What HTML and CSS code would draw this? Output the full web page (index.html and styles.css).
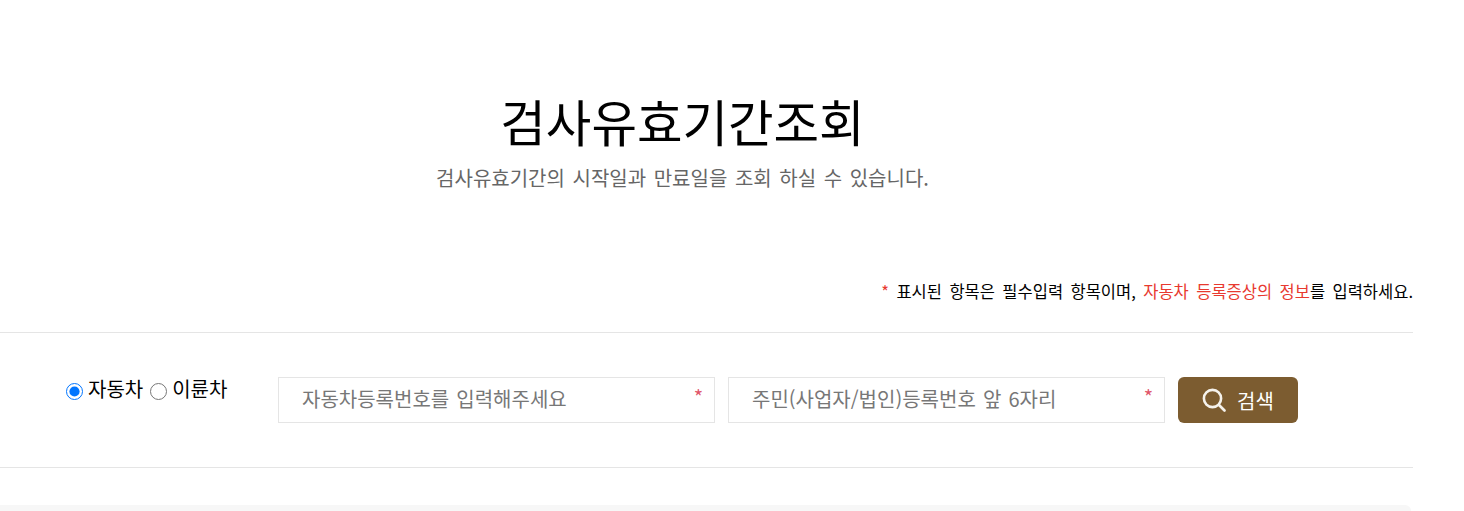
FILE: index.html
```html
<!DOCTYPE html>
<html lang="ko">
  <head>
    <meta charset="UTF-8" />
    <meta name="viewport" content="width=device-width, initial-scale=1.0" />
    <title>검사유효기간조회</title>
    <link rel="stylesheet" href="styles.css">
  </head>
  <body>
    <div class="page">
      <div class="title-box">
        <h1>검사유효기간조회</h1>
        <p>검사유효기간의 시작일과 만료일을 조회 하실 수 있습니다.</p>
      </div>

      <p class="notice">
        <span class="red">*</span> 표시된 항목은 필수입력 항목이며, <span class="red">자동차 등록증상의 정보</span>를 입력하세요.
      </p>

      <form class="search-row">
        <div class="radios">
          <label><input type="radio" name="kind" checked />자동차</label>
          <label><input type="radio" name="kind" />이륜차</label>
        </div>
        <div class="field">
          <input type="text" placeholder="자동차등록번호를 입력해주세요" />
          <span class="star">*</span>
        </div>
        <div class="field">
          <input type="text" placeholder="주민(사업자/법인)등록번호 앞 6자리" />
          <span class="star">*</span>
        </div>
        <button type="button" class="search-btn">
          <svg width="24" height="24" viewBox="0 0 24 24" fill="none" stroke="#f5f2ec" stroke-width="2.6" stroke-linecap="round">
            <circle cx="10.5" cy="10.5" r="8.6" />
            <path d="M17 17l5.5 5.5" />
          </svg>
          검색
        </button>
      </form>

      <div class="result-box"></div>
    </div>
  </body>
</html>
```

FILE: styles.css
```css
* {
  box-sizing: border-box;
}

html,
body {
  height: 511px;
  overflow: hidden;
}

body {
  margin: 0;
  background: #fff;
  font-family: "Noto Sans CJK KR", "Noto Sans", sans-serif;
  color: #000;
}

.page {
  width: 1413px;
}

.title-box {
  padding-top: 89px;
  text-align: center;
  width: 1365px;
}

.title-box h1 {
  margin: 0;
  font-size: 49.5px;
  line-height: 64px;
  font-weight: 400;
}

.title-box p {
  margin: 11px 0 0;
  font-size: 20px;
  line-height: 28px;
  word-spacing: 2px;
  color: #666;
}

.notice {
  margin: 88px 0 0;
  font-size: 16.5px;
  line-height: 22px;
  word-spacing: 2.8px;
  text-align: right;
}

.red {
  color: #e8392f;
}

.search-row {
  display: flex;
  align-items: flex-start;
  margin-top: 30px;
  height: 136px;
  padding: 44px 0 0 66px;
  border-top: 1px solid #e5e5e5;
  border-bottom: 1px solid #e5e5e5;
}

.radios {
  display: flex;
  gap: 7px;
  width: 212px;
  font-size: 20px;
  line-height: 24px;
}

.radios label {
  display: flex;
  align-items: center;
}

.radios input {
  width: 17px;
  height: 17px;
  margin: 4px 5px 0 0;
}

.field {
  position: relative;
  width: 437px;
  height: 46px;
  margin-right: 13px;
}

.field input {
  width: 100%;
  height: 100%;
  padding: 0 23px 3px;
  border: 1px solid #e5e5e5;
  font-family: inherit;
  font-size: 20px;
  word-spacing: 1.5px;
  outline: none;
}

.field input::placeholder {
  color: #777;
}

.star {
  position: absolute;
  top: 5px;
  right: 12px;
  font-size: 20px;
  color: #e0566a;
}

.search-btn {
  display: flex;
  align-items: center;
  justify-content: center;
  gap: 11px;
  width: 120px;
  height: 46px;
  border: 0;
  border-radius: 6px;
  background: #7c5c30;
  color: #fff;
  font-family: inherit;
  font-size: 20px;
}

.result-box {
  margin-top: 37px;
  height: 6px;
  background: #f7f7f7;
  border-top-right-radius: 8px;
  width: 1411px;
}
```
